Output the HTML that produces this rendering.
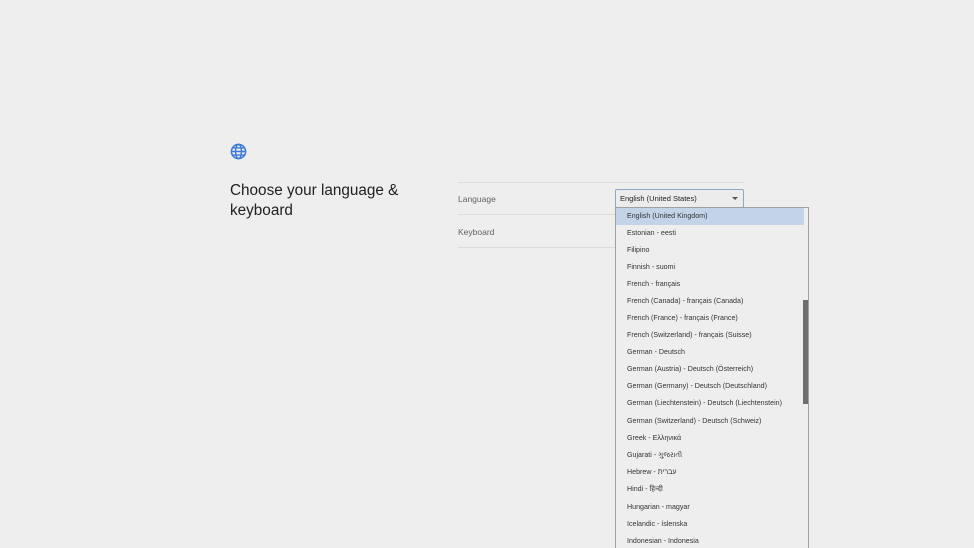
<!DOCTYPE html>
<html><head><meta charset="utf-8"><style>
html,body{margin:0;width:974px;height:548px;overflow:hidden}
body{background:#eeeeee;font-family:"Liberation Sans","Noto Sans CJK SC",sans-serif;position:relative;color:#202124}
.t{position:absolute;left:230px;top:181px;font-size:15.3px;line-height:20px;color:#202124}
.line{position:absolute;left:458px;width:286px;height:1px;background:#dcdcdc}
.lab{position:absolute;left:458px;font-size:8.5px;color:#5f6368}
.sel{position:absolute;left:615px;top:189px;width:127px;height:17px;border:1px solid #8fa8c8;border-radius:2px;background:#ececec;font-size:7.5px;line-height:17px;box-sizing:content-box}
.sel span{position:absolute;left:4px}
.sel i{position:absolute;right:5px;top:7px;width:0;height:0;border-left:3px solid transparent;border-right:3px solid transparent;border-top:3px solid #555}
.dd{position:absolute;left:615px;top:207px;width:192px;height:360px;border:1px solid #a0a0a0;background:#eeeeee}
.it{position:absolute;left:0;width:188px;height:17px;font-size:7.1px;line-height:17px;padding-left:11px;box-sizing:border-box;color:#333}
.hl{background:#c3d4e8}
.sb{position:absolute;left:187px;top:92px;width:5px;height:104px;background:#6e6e6e}
</style></head><body>
<svg style="position:absolute;left:230px;top:143px" width="17" height="17" viewBox="0 0 24 24"><circle cx="12" cy="12" r="10" fill="none" stroke="#3b78d8" stroke-width="2.2"/><ellipse cx="12" cy="12" rx="4.2" ry="10" fill="none" stroke="#3b78d8" stroke-width="2"/><path d="M2 12h20M4 7h16M4 17h16" stroke="#3b78d8" stroke-width="2"/></svg>
<div class="t">Choose your language &amp;<br>keyboard</div>
<div class="line" style="top:182px"></div>
<div class="line" style="top:214px"></div>
<div class="line" style="top:247px"></div>
<div class="lab" style="top:194px">Language</div>
<div class="lab" style="top:227px">Keyboard</div>
<div class="sel"><span>English (United States)</span><i></i></div>
<div class="dd">
<div class="it hl" style="top:0">English (United Kingdom)</div>
<div class="it" style="top:17px">Estonian - eesti</div>
<div class="it" style="top:34px">Filipino</div>
<div class="it" style="top:51px">Finnish - suomi</div>
<div class="it" style="top:68px">French - français</div>
<div class="it" style="top:85px">French (Canada) - français (Canada)</div>
<div class="it" style="top:102px">French (France) - français (France)</div>
<div class="it" style="top:119px">French (Switzerland) - français (Suisse)</div>
<div class="it" style="top:136px">German - Deutsch</div>
<div class="it" style="top:153px">German (Austria) - Deutsch (Österreich)</div>
<div class="it" style="top:170px">German (Germany) - Deutsch (Deutschland)</div>
<div class="it" style="top:187px">German (Liechtenstein) - Deutsch (Liechtenstein)</div>
<div class="it" style="top:205px">German (Switzerland) - Deutsch (Schweiz)</div>
<div class="it" style="top:222px">Greek - Ελληνικά</div>
<div class="it" style="top:239px">Gujarati - ગુજરાતી</div>
<div class="it" style="top:256px">Hebrew - עברית</div>
<div class="it" style="top:273px">Hindi - हिन्दी</div>
<div class="it" style="top:291px">Hungarian - magyar</div>
<div class="it" style="top:308px">Icelandic - íslenska</div>
<div class="it" style="top:325px">Indonesian - Indonesia</div>
<div class="sb"></div>
</div>
</body></html>
